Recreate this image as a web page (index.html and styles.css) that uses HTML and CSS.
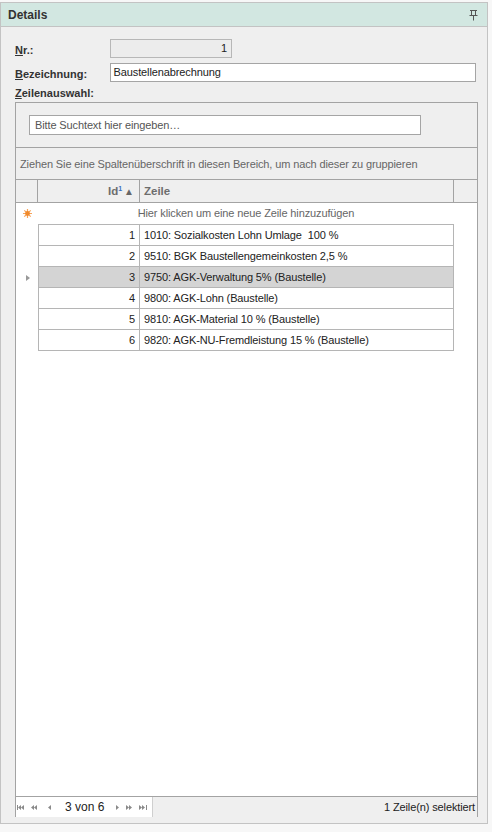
FILE: index.html
```html
<!DOCTYPE html>
<html>
<head>
<meta charset="utf-8">
<link rel="stylesheet" href="styles.css">
</head>
<body>
<div class="panel">
  <div class="panel-head">
    <span class="title">Details</span>
    <svg class="pin" width="9" height="11" viewBox="0 0 9 11"><path d="M1 0.5H8M2.5 1V5M6.5 1V5M0.5 5.5H8.5M4.5 6V10.5" stroke="#555" stroke-width="1" fill="none"/></svg>
  </div>
  <div class="panel-body">
    <div class="form-row">
      <label class="lbl"><u>N</u>r.:</label>
      <div class="inp inp-ro">1</div>
    </div>
    <div class="form-row">
      <label class="lbl"><u>B</u>ezeichnung:</label>
      <div class="inp inp-wide">Baustellenabrechnung</div>
    </div>
    <div class="lbl lbl-block"><u>Z</u>eilenauswahl:</div>
    <div class="grid">
      <div class="search-panel">
        <div class="search">Bitte Suchtext hier eingeben…</div>
      </div>
      <div class="group-panel">Ziehen Sie eine Spaltenüberschrift in diesen Bereich, um nach dieser zu gruppieren</div>
      <div class="grid-head">
        <div class="c-ind"></div>
        <div class="c-id hd">Id<sup>1</sup><span class="sort">▲</span></div>
        <div class="c-txt hd">Zeile</div>
        <div class="c-fill"></div>
      </div>
      <div class="grid-body">
        <div class="new-row">
          <div class="c-ind star">
            <svg width="9" height="9" viewBox="0 0 9 9"><path d="M4.5 0V9M0 4.5H9M1.3 1.3L7.7 7.7M7.7 1.3L1.3 7.7" stroke="#f6a35a" stroke-width="1.2"/><circle cx="4.5" cy="4.5" r="2.4" fill="#f08a2c"/></svg>
          </div>
          <div class="new-txt">Hier klicken um eine neue Zeile hinzuzufügen</div>
        </div>
        <div class="rows">
          <div class="row"><div class="c-ind"></div><div class="c-id">1</div><div class="c-txt">1010: Sozialkosten Lohn Umlage&nbsp; 100 %</div></div>
          <div class="row"><div class="c-ind"></div><div class="c-id">2</div><div class="c-txt">9510: BGK Baustellengemeinkosten 2,5 %</div></div>
          <div class="row sel"><div class="c-ind"><span class="cur"></span></div><div class="c-id">3</div><div class="c-txt">9750: AGK-Verwaltung 5% (Baustelle)</div></div>
          <div class="row"><div class="c-ind"></div><div class="c-id">4</div><div class="c-txt">9800: AGK-Lohn (Baustelle)</div></div>
          <div class="row"><div class="c-ind"></div><div class="c-id">5</div><div class="c-txt">9810: AGK-Material 10 % (Baustelle)</div></div>
          <div class="row"><div class="c-ind"></div><div class="c-id">6</div><div class="c-txt">9820: AGK-NU-Fremdleistung 15 % (Baustelle)</div></div>
        </div>
      </div>
      <div class="grid-foot">
        <div class="nav">
          <svg class="n1" width="7" height="5" viewBox="0 0 7 5"><path d="M0.5 0V5" stroke="#8a8a8a"/><path d="M4 0L1 2.5L4 5ZM7 0L4 2.5L7 5Z" fill="#8a8a8a"/></svg>
          <svg class="n2" width="6" height="5" viewBox="0 0 6 5"><path d="M3 0L0 2.5L3 5ZM6 0L3 2.5L6 5Z" fill="#8a8a8a"/></svg>
          <svg class="n3" width="3" height="5" viewBox="0 0 3 5"><path d="M3 0L0 2.5L3 5Z" fill="#8a8a8a"/></svg>
          <span class="nav-txt">3 von 6</span>
          <svg class="n4" width="3" height="5" viewBox="0 0 3 5"><path d="M0 0L3 2.5L0 5Z" fill="#8a8a8a"/></svg>
          <svg class="n5" width="6" height="5" viewBox="0 0 6 5"><path d="M0 0L3 2.5L0 5ZM3 0L6 2.5L3 5Z" fill="#8a8a8a"/></svg>
          <svg class="n6" width="8" height="5" viewBox="0 0 8 5"><path d="M0 0L3 2.5L0 5ZM3 0L6 2.5L3 5Z" fill="#8a8a8a"/><path d="M7.5 0V5" stroke="#8a8a8a"/></svg>
        </div>
        <div class="status">1 Zeile(n) selektiert</div>
      </div>
    </div>
  </div>
</div>
</body>
</html>
```

FILE: styles.css
```css
html, body {
  margin: 0;
  padding: 0;
  background: #f7f7f7;
}
body {
  font-family: "Liberation Sans", Arial, sans-serif;
  font-size: 11px;
  color: #222;
  padding-top: 2px;
  letter-spacing: -0.12px;
}
.panel {
  width: 488px;
  height: 822px;
  border: 1px solid #c3c3c3;
  background: #efefef;
  display: flex;
  flex-direction: column;
  box-sizing: border-box;
}
.panel-head {
  height: 23px;
  flex: none;
  background: #d2e7e1;
  border-bottom: 1px solid #c3c3c3;
  display: flex;
  align-items: center;
  justify-content: space-between;
  padding: 0 9px 0 7px;
}
.title {
  font-weight: bold;
  font-size: 12px;
  color: #333;
  letter-spacing: 0;
}
.pin { display: block; margin-top: 1px; }
.panel-body {
  flex: 1;
  display: flex;
  flex-direction: column;
  padding: 12px 11px 6px 14px;
}
.form-row {
  display: flex;
  align-items: center;
  height: 19px;
  margin-bottom: 5px;
}
.lbl {
  font-weight: bold;
  color: #333;
  width: 95px;
  padding-top: 2px;
  letter-spacing: 0;
}
.lbl u { text-decoration: underline; }
.lbl-block {
  height: 14px;
  line-height: 14px;
  padding: 0;
  margin-top: -1px;
}
.inp {
  height: 19px;
  box-sizing: border-box;
  border: 1px solid #a5a5a5;
  background: #fff;
  line-height: 17px;
  padding: 0 4px 0 3px;
  color: #222;
}
.inp-ro {
  width: 122px;
  background: #ececec;
  border-color: #b7b7b7;
  text-align: right;
}
.inp-wide { width: 368px; }
.grid {
  flex: 1;
  display: flex;
  flex-direction: column;
  margin-top: 2px;
  width: 463px;
  box-sizing: border-box;
  border: 1px solid #a3a3a3;
  border-bottom: none;
}
.search-panel {
  height: 45px;
  flex: none;
  box-sizing: border-box;
  border-bottom: 1px solid #a3a3a3;
  padding: 12px 0 0 13px;
}
.search {
  width: 392px;
  height: 20px;
  box-sizing: border-box;
  border: 1px solid #a5a5a5;
  background: #fff;
  line-height: 18px;
  padding-left: 5px;
  color: #555;
}
.group-panel {
  height: 32px;
  flex: none;
  box-sizing: border-box;
  border-bottom: 1px solid #a3a3a3;
  padding-left: 4px;
  line-height: 33px;
  color: #666;
}
.grid-head {
  display: flex;
  height: 23px;
  flex: none;
  box-sizing: border-box;
  border-bottom: 1px solid #a3a3a3;
}
.c-ind {
  width: 22px;
  flex: none;
  box-sizing: border-box;
}
.grid-head .c-ind,
.grid-head .c-id,
.grid-head .c-txt {
  border-right: 1px solid #a3a3a3;
}
.c-id {
  width: 102px;
  flex: none;
  box-sizing: border-box;
  text-align: right;
  padding-right: 5px;
}
.c-txt {
  width: 314px;
  flex: none;
  box-sizing: border-box;
  padding-left: 4px;
}
.c-fill { flex: 1; }
.hd {
  font-weight: bold;
  color: #6d6d6d;
  font-size: 11.5px;
  line-height: 22px;
  letter-spacing: 0;
}
.hd sup {
  color: #3a6fc0;
  font-size: 7px;
  vertical-align: 4px;
  line-height: 0;
}
.sort {
  font-size: 10px;
  color: #666;
  margin-left: 2px;
  vertical-align: 0;
}
.grid-body {
  flex: 1;
  background: #fff;
  display: flex;
  flex-direction: column;
}
.new-row {
  display: flex;
  height: 21px;
}
.star {
  display: flex;
  align-items: center;
  justify-content: center;
  padding-left: 1px;
}
.star svg { display: block; }
.new-txt {
  width: 416px;
  text-align: center;
  line-height: 21px;
  color: #666;
}
.rows {
  display: flex;
  flex-direction: column;
}
.row {
  display: flex;
  height: 21px;
  line-height: 20px;
}
.row .c-id {
  border-left: 1px solid #b5b5b5;
  border-right: 1px solid #b5b5b5;
  border-bottom: 1px solid #b5b5b5;
  padding-right: 4px;
}
.row .c-txt {
  border-right: 1px solid #b5b5b5;
  border-bottom: 1px solid #b5b5b5;
  width: 314px;
}
.row:first-child .c-id,
.row:first-child .c-txt {
  border-top: 1px solid #b5b5b5;
}
.row:first-child { height: 22px; }
.sel .c-id, .sel .c-txt { background: #d4d4d4; }
.sel .c-ind {
  display: flex;
  align-items: center;
  justify-content: center;
}
.cur {
  width: 0;
  height: 0;
  border-top: 3px solid transparent;
  border-bottom: 3px solid transparent;
  border-left: 4px solid #999;
  margin-left: 1px;
}
.grid-foot {
  display: flex;
  align-items: center;
  justify-content: space-between;
  height: 20px;
  flex: none;
  border-top: 1px solid #a3a3a3;
  margin-left: -1px;
  margin-right: -1px;
}
.nav {
  height: 20px;
  width: 138px;
  box-sizing: border-box;
  background: #fff;
  border-left: 1px solid #a3a3a3;
  border-right: 1px solid #cfcfcf;
  display: flex;
  align-items: center;
  padding-left: 1px;
}
.nav svg { display: block; flex: none; }
.n2 { margin-left: 7px; }
.n3 { margin-left: 11px; }
.nav-txt {
  font-family: "Liberation Sans", Arial, sans-serif;
  font-size: 12px;
  letter-spacing: 0;
  color: #222;
  margin: 0 12px 0 14px;
}
.n5 { margin-left: 7px; }
.n6 { margin-left: 7px; }
.status {
  padding-right: 3px;
  color: #222;
}
```
